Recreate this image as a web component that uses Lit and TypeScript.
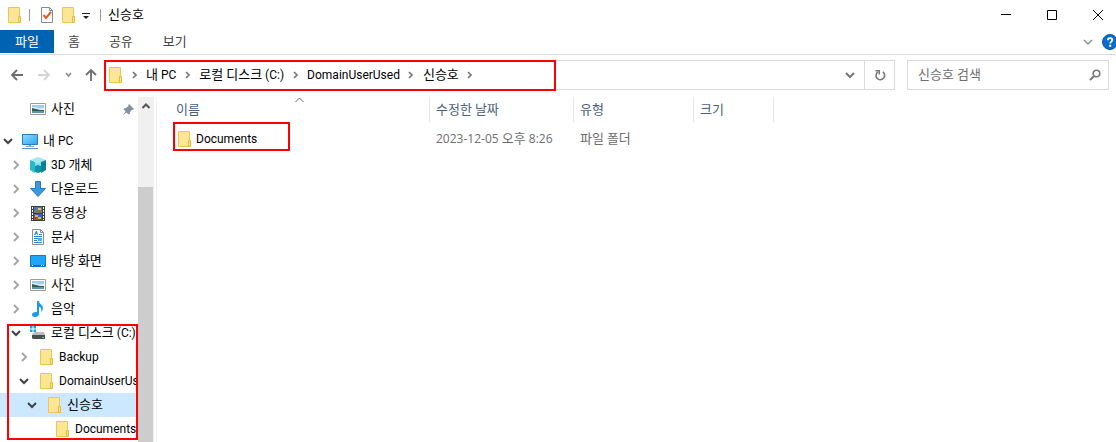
import { LitElement, html, css, svg, nothing, TemplateResult } from "lit";
import { customElement, property } from "lit/decorators.js";
import { classMap } from "lit/directives/class-map.js";
import { styleMap } from "lit/directives/style-map.js";

/** Hangul runs are set one size larger than the Latin text around them. */
const label = (text: string) =>
  html`<span>${text
    .split(/([\uac00-\ud7a3]+)/)
    .filter(Boolean)
    .map((run) => (/[\uac00-\ud7a3]/.test(run) ? html`<span class="ko">${run}</span>` : run))}</span>`;

const icon = (w: number, h: number, body: TemplateResult) =>
  html`<svg width=${w} height=${h} viewBox="0 0 ${w} ${h}" aria-hidden="true">${body}</svg>`;

const folder = () =>
  icon(16, 16, svg`
    <path d="M2.500.5h11v15h-11z" fill="#ffe694" stroke="#ecc655"/>
    <path d="M14 0h1v9h-1z" fill="#fff" fill-opacity="0"/>
    <path d="M12.500 9.500h2v6h-2z" fill="#ffe17f" stroke="#e6bb3c"/>`);

const picture = () =>
  icon(16, 16, svg`
    <path d="M.5 2.500h15v11H.5z" fill="#fff" stroke="#9c9c9c"/>
    <path d="M2 4h12v8H2z" fill="#9fcdf0"/>
    <path d="M2 6h3l3 1 6 0v2H2z" fill="#dcebf5"/>
    <path d="M2 7l4 1 4 1h4v1H2z" fill="#2f5e55"/>
    <path d="M2 10h12v2H2z" fill="#5e93b8"/>`);

const icons: Record<string, () => TemplateResult> = {
  folder,
  picture,
  pc: () =>
    icon(16, 16, svg`
      <defs><linearGradient id="g" x1="0" y1="0" x2="1" y2="1"><stop offset="0" stop-color="#8fdcff"/><stop offset="1" stop-color="#2da3ee"/></linearGradient></defs>
      <path d="M.5 1.500h15v10H.5z" fill="url(#g)" stroke="#1c7fbf"/>
      <path d="M7 12h2v1H7zM4 13h8v1H4z" fill="#8aa4b8"/>
      <path d="M0 15h16v1H0z" fill="#6d93b3"/>`),
  cube: () =>
    icon(16, 16, svg`
      <path d="M0 3l8-3 8 3-8 3z" fill="#9fe9f0"/>
      <path d="M0 3l5 2v11l-5-3z" fill="#27b9cc"/>
      <path d="M5 5l3 1 3-1v4l-3-1-3 2z" fill="#7be0ea"/>
      <path d="M5 9l3-1 3 1v6l-3 1-3-1z" fill="#0b94ab"/>
      <path d="M16 3l-5 2v11l5-3z" fill="#0e7f99"/>`),
  down: () => icon(16, 16, svg`<path d="M5.500.5h5v7h5L8 15.500.5 7.500h5z" fill="#3b97e3" stroke="#2179c7"/>`),
  film: () =>
    icon(16, 16, svg`
      <path d="M1 1h14v15H1z" fill="#3d3d3d"/>
      <path d="M4 2h8v6H4z" fill="#3f74d6"/><path d="M4 9h8v6H4z" fill="#3568c4"/>
      <path d="M4 5l3-2 2 2 3-1v4H4z" fill="#6d7f5d"/><path d="M8 3h3v2H8z" fill="#f2c24a"/>
      <path d="M5 10h3v2H5zM8 12h3v2H8z" fill="#e9b144"/><path d="M4 13h4v2H4z" fill="#a5503a"/>
      <path d="M2 2h1v2H2zM2 5h1v2H2zM2 8h1v2H2zM2 11h1v2H2zM2 14h1v1H2zM13 2h1v2h-1zM13 5h1v2h-1zM13 8h1v2h-1zM13 11h1v2h-1zM13 14h1v1h-1z" fill="#fff"/>`),
  doc: () =>
    icon(16, 16, svg`
      <path d="M2.500.5h8l3 3v12h-11z" fill="#fff" stroke="#8d8d8d"/>
      <path d="M10.500.5v3h3" fill="none" stroke="#8d8d8d"/>
      <path d="M4 6l2-4h1l1 4H7V5H6L5 6zM9 5h3v1H9zM4 7h8v1H4zM4 9h4v1H4zM4 11h3v1H4zM4 13h8v1H4z" fill="#2b87d1"/>
      <path d="M8 9h4v3H8z" fill="#58a9e4"/>`),
  desktop: () =>
    icon(16, 16, svg`
      <path d="M.5 2.500h15v11H.5z" fill="#1ea5fc" stroke="#1478c8"/>
      <path d="M1 12h14v1H1z" fill="#0b66b0"/>
      <path d="M2 12h1v1H2zM11 12h1v1h-1zM13 12h1v1h-1z" fill="#fff"/>`),
  music: () =>
    icon(16, 16, svg`
      <path d="M7 0h2c0 3 4 4 4 7 0 2-1 3-2 4 1-3 0-5-2-5v7c0 2-2 3-4 3-1.500 0-3-.8-3-2.300C2 12 4 11 5.500 11c.6 0 1 .1 1.500.3z" fill="#1c9bee"/>`),
  disk: () =>
    icon(16, 16, svg`
      <path d="M0 1h2.500v2.500H0zM3.500 1H6v2.500H3.500zM0 4.500h2.500V7H0zM3.500 4.500H6V7H3.500z" fill="#12a7f0"/>
      <path d="M3 8l2-1h9l1 3H2z" fill="#b9bcc0"/>
      <path d="M2 10h13v4H3l-1-1z" fill="#4a4e53"/>
      <path d="M12 12h2v1h-2z" fill="#44e05c"/>`),
};

const chevron = (open: boolean) =>
  open
    ? icon(10, 10, svg`<path d="M1 3l4 4 4-4" fill="none" stroke="#404040" stroke-width="2"/>`)
    : icon(10, 10, svg`<path d="M3 1l4 4-4 4" fill="none" stroke="#a6a6a6" stroke-width="2"/>`);

interface TreeItem {
  text: string;
  icon: string;
  level: number;
  open?: boolean;
  selected?: boolean;
}

const tree: TreeItem[] = [
  { text: "내 PC", icon: "pc", level: 0, open: true },
  { text: "3D 개체", icon: "cube", level: 1, open: false },
  { text: "다운로드", icon: "down", level: 1, open: false },
  { text: "동영상", icon: "film", level: 1, open: false },
  { text: "문서", icon: "doc", level: 1, open: false },
  { text: "바탕 화면", icon: "desktop", level: 1, open: false },
  { text: "사진", icon: "picture", level: 1, open: false },
  { text: "음악", icon: "music", level: 1, open: false },
  { text: "로컬 디스크 (C:)", icon: "disk", level: 1, open: true },
  { text: "Backup", icon: "folder", level: 2, open: false },
  { text: "DomainUserUsed", icon: "folder", level: 2, open: true },
  { text: "신승호", icon: "folder", level: 3, open: true, selected: true },
  { text: "Documents", icon: "folder", level: 4 },
];

const shared = css`
  :host,
  * {
    box-sizing: border-box;
  }
  button,
  input {
    font: inherit;
    color: inherit;
    background: none;
    border: 0;
    padding: 0;
    margin: 0;
  }
  button {
    display: flex;
    align-items: center;
    justify-content: center;
    white-space: nowrap;
  }
  .ko {
    font-size: 13px;
  }
  svg {
    display: block;
    flex: none;
  }
`;

@customElement("explorer-titlebar")
export class ExplorerTitlebar extends LitElement {
  static styles = [
    shared,
    css`
      :host {
        display: block;
        overflow: hidden;
      }
      .title {
        display: flex;
        align-items: center;
        height: 29px;
        padding-left: 6px;
      }
      .rule {
        width: 1px;
        height: 12px;
        background: #999;
        margin: 0 7px;
      }
      .quick {
        margin: 0 3px;
      }
      .name {
        flex: 1;
        font-weight: normal;
        font-size: 12px;
        margin: 0;
      }
      .window {
        display: flex;
        margin-right: -5px;
      }
      .window button {
        width: 46px;
        height: 28px;
      }
      .tabs {
        display: flex;
        height: 26px;
        border-bottom: 1px solid #dadbdc;
        color: #444;
      }
      .tabs button {
        height: 23px;
        margin-top: 1px;
        padding: 0 15px;
      }
      .tabs .file {
        background: #0063b1;
        color: #fff;
      }
      .tabs .file + button {
        padding: 0 14px;
      }
      .right {
        display: flex;
        gap: 9px;
        margin: 0 -2px 0 auto;
      }
      .tabs .right button {
        padding: 0;
      }
    `,
  ];

  render() {
    return html`
      <div class="title">
        ${folder()}
        <span class="rule"></span>
        <button class="quick" aria-label="속성">
          ${icon(14, 16, svg`
            <path d="M1.500.5h8l3 3v12h-11z" fill="#fafafa" stroke="#8a8a8a"/>
            <path d="M9.500.5v3h3" fill="none" stroke="#8a8a8a"/>
            <path d="M3.500 8l2.500 3 5-6" fill="none" stroke="#e2592a" stroke-width="2"/>`)}
        </button>
        <button class="quick" aria-label="새 폴더">${folder()}</button>
        <button class="quick" aria-label="빠른 실행 도구 모음 사용자 지정">
          ${icon(8, 12, svg`<path d="M0 4h8v1H0zM1 7h6L4 10z" fill="#222"/>`)}
        </button>
        <span class="rule"></span>
        <h1 class="name">${label("신승호")}</h1>
        <div class="window">
          <button aria-label="최소화">${icon(10, 10, svg`<path d="M0 4h10v1H0z"/>`)}</button>
          <button aria-label="최대화">${icon(10, 10, svg`<path d="M.5.500h9v9h-9z" fill="none" stroke="#000"/>`)}</button>
          <button aria-label="닫기">${icon(10, 10, svg`<path d="M0 0l10 10M10 0L0 10" stroke="#000"/>`)}</button>
        </div>
      </div>
      <nav class="tabs">
        <button class="file">${label("파일")}</button>
        <button>${label("홈")}</button>
        <button>${label("공유")}</button>
        <button>${label("보기")}</button>
        <div class="right">
          <button aria-label="리본 확장">
            ${icon(10, 8, svg`<path d="M1 2l4 4 4-4" fill="none" stroke="#8a8a8a" stroke-width="1.300"/>`)}
          </button>
          <button aria-label="도움말">
            ${icon(16, 16, svg`
              <circle cx="8" cy="8" r="7.500" fill="#0a6cce" stroke="#0a56a8"/>
              <path d="M5.800 6.200C5.800 3.300 10.300 3.500 10.300 6c0 1.600-2.100 1.700-2.100 3.600" fill="none" stroke="#fff" stroke-width="1.800"/>
              <path d="M7.200 10.800h2v2h-2z" fill="#fff"/>`)}
          </button>
        </div>
      </nav>
    `;
  }
}

@customElement("explorer-address")
export class ExplorerAddress extends LitElement {
  @property({ attribute: false }) path = ["내 PC", "로컬 디스크 (C:)", "DomainUserUsed", "신승호"];

  static styles = [
    shared,
    css`
      :host {
        display: flex;
        height: 42px;
        padding: 5px 7px 7px 10px;
      }
      .nav {
        display: flex;
        width: 95px;
        align-items: center;
        justify-content: space-between;
        padding-right: 8px;
        flex: none;
      }
      .bar {
        position: relative;
        display: flex;
        align-items: center;
        flex: 1;
        border: 1px solid #d9d9d9;
        padding-left: 1px;
      }
      .crumb {
        display: flex;
        align-items: center;
      }
      .crumb button {
        padding-bottom: 1px;
      }
      .sep {
        display: flex;
        width: 23px;
        justify-content: center;
      }
      .drop {
        margin-left: auto;
        width: 29px;
        height: 28px;
      }
      .refresh {
        width: 30px;
        height: 28px;
        border-left: 1px solid #d9d9d9;
      }
      .search {
        display: flex;
        align-items: center;
        width: 202px;
        margin-left: 12px;
        border: 1px solid #d9d9d9;
        padding: 0 7px 0 10px;
      }
      .search input {
        flex: 1;
        min-width: 0;
        font-size: 13px;
        outline: 0;
        padding-bottom: 1px;
      }
      .search input::placeholder {
        color: #6d6d6d;
        opacity: 1;
      }
      .mark {
        position: absolute;
        left: -2px;
        top: -1px;
        width: 452px;
        height: 31px;
        border: 2px solid #f00;
        pointer-events: none;
      }
    `,
  ];

  private sep() {
    return html`<span class="sep">${icon(6, 8, svg`<path d="M1 1l3 3-3 3" fill="none" stroke="#777" stroke-width="1.700"/>`)}</span>`;
  }

  render() {
    return html`
      <div class="nav">
        <button aria-label="뒤로">${icon(14, 12, svg`<path d="M13 6H2M7 1L2 6l5 5" fill="none" stroke="#6e6e6e" stroke-width="1.800"/>`)}</button>
        <button aria-label="앞으로">${icon(14, 12, svg`<path d="M1 6h11M7 1l5 5-5 5" fill="none" stroke="#d4d4d4" stroke-width="1.800"/>`)}</button>
        <button aria-label="최근 위치">${icon(7, 6, svg`<path d="M1 1l2.500 3L6 1" fill="none" stroke="#888" stroke-width="1.500"/>`)}</button>
        <button aria-label="위로">${icon(12, 14, svg`<path d="M6 13V2M1 7l5-5 5 5" fill="none" stroke="#6e6e6e" stroke-width="1.800"/>`)}</button>
      </div>
      <div class="bar">
        ${folder()} ${this.sep()}
        ${this.path.map((part) => html`<span class="crumb"><button>${label(part)}</button>${this.sep()}</span>`)}
        <button class="drop" aria-label="이전 위치">
          ${icon(10, 8, svg`<path d="M1 2l4 4 4-4" fill="none" stroke="#777" stroke-width="2"/>`)}
        </button>
        <button class="refresh" aria-label="새로 고침">
          ${icon(12, 12, svg`<path d="M8.800 2.900A4.300 4.300 0 1 1 4 2.800" fill="none" stroke="#777" stroke-width="1.600"/><path d="M1.500 1h4.500v4.500H4.500V2.500h-3z" fill="#777"/>`)}
        </button>
        <span class="mark"></span>
      </div>
      <label class="search">
        <input type="search" aria-label="신승호 검색" placeholder="신승호 검색" />
        ${icon(12, 12, svg`<circle cx="7.500" cy="4.500" r="3.300" fill="none" stroke="#777" stroke-width="1.600"/><path d="M5 7l-4 4" stroke="#777" stroke-width="2"/>`)}
      </label>
    `;
  }
}

@customElement("explorer-tree")
export class ExplorerTree extends LitElement {
  static styles = [
    shared,
    css`
      :host {
        display: flex;
        min-height: 0;
        border-right: 1px solid #f0f0f0;
        padding-right: 2px;
      }
      .items {
        position: relative;
        flex: 1;
        min-width: 0;
        overflow: hidden;
      }
      ul {
        list-style: none;
        margin: 0;
        padding: 0;
      }
      .quick {
        margin-bottom: 8px;
      }
      .row {
        display: flex;
        align-items: center;
        height: 24px;
        white-space: nowrap;
      }
      .selected {
        background: #cce8ff;
      }
      .toggle {
        width: 16px;
        height: 24px;
        flex: none;
        margin-right: 6px;
      }
      .text {
        padding-left: 5px;
      }
      .pin {
        margin: 0 4px 0 auto;
      }
      .scroll {
        width: 16px;
        background: #f0f0f0;
        display: flex;
        flex-direction: column;
      }
      .scroll button {
        height: 17px;
      }
      .thumb {
        flex: 1;
        margin: 73px 1px 0 0;
        background: #cdcdcd;
      }
      .mark {
        position: absolute;
        left: 7px;
        right: 0;
        top: 227px;
        height: 116px;
        border: 2px solid #f00;
        pointer-events: none;
      }
    `,
  ];

  private row(item: TreeItem, pinned = false) {
    return html`<li
      class=${classMap({ row: true, selected: !!item.selected })}
      style=${styleMap({ paddingLeft: `${item.level * 8}px` })}
    >
      ${item.open === undefined
        ? html`<span class="toggle"></span>`
        : html`<button class="toggle" aria-label="${item.text} ${item.open ? "접기" : "펼치기"}">${chevron(item.open)}</button>`}
      ${icons[item.icon]()}
      <span class="text">${label(item.text)}</span>
      ${pinned
        ? html`<span class="pin">${icon(11, 11, svg`<path d="M6 0l5 5-1 1-1-.3L7 8l-.3 2-1 .6-2.200-2.200L0 11l2.600-3.500L.5 5.300 1 4.400 3 4l2.500-2L5.200 1z" fill="#8291a0"/>`)}</span>`
        : nothing}
    </li>`;
  }

  render() {
    return html`
      <nav class="items">
        <ul class="quick">${this.row({ text: "사진", icon: "picture", level: 1 }, true)}</ul>
        <ul>${tree.map((item) => this.row(item))}</ul>
        <span class="mark"></span>
      </nav>
      <div class="scroll">
        <button aria-label="위로 스크롤">
          ${icon(10, 8, svg`<path d="M1.500 6L5 2.500 8.500 6" fill="none" stroke="#555" stroke-width="2"/>`)}
        </button>
        <span class="thumb"></span>
      </div>
    `;
  }
}

@customElement("explorer-list")
export class ExplorerList extends LitElement {
  static styles = [
    shared,
    css`
      :host {
        display: block;
      }
      table {
        width: 100%;
        table-layout: fixed;
        border-collapse: separate;
        border-spacing: 0;
      }
      .c-name {
        width: 273px;
      }
      .c-date {
        width: 144px;
      }
      .c-type {
        width: 120px;
      }
      .c-size {
        width: 80px;
      }
      th,
      td {
        position: relative;
        height: 25px;
        padding: 0 0 0 6px;
        text-align: left;
        font-weight: normal;
        white-space: nowrap;
        color: #6d6d6d;
      }
      th {
        border-right: 1px solid #e5e5e5;
        color: #4c607a;
      }
      th:last-child {
        border: 0;
      }
      th:first-child {
        padding-left: 19px;
      }
      td {
        height: 33px;
      }
      td:first-child {
        padding-left: 19px;
        color: #000;
      }
      .date {
        font-family: "Open Sans", "Noto Sans CJK KR", sans-serif;
      }
      .sort {
        position: absolute;
        left: 138px;
        top: 0;
      }
      .file {
        display: flex;
        align-items: center;
        gap: 4px;
      }
      .mark {
        position: absolute;
        left: 16px;
        top: 0;
        width: 117px;
        height: 29px;
        border: 2px solid #f00;
        pointer-events: none;
      }
    `,
  ];

  render() {
    return html`
      <table>
        <colgroup>
          <col class="c-name" /><col class="c-date" /><col class="c-type" /><col class="c-size" /><col />
        </colgroup>
        <thead>
          <tr>
            <th>
              ${label("이름")}
              <span class="sort">${icon(9, 6, svg`<path d="M.5 5l4-4 4 4" fill="none" stroke="#666"/>`)}</span>
            </th>
            <th>${label("수정한 날짜")}</th>
            <th>${label("유형")}</th>
            <th>${label("크기")}</th>
            <th></th>
          </tr>
        </thead>
        <tbody>
          <tr>
            <td>
              <span class="file">${folder()}<span>Documents</span></span>
              <span class="mark"></span>
            </td>
            <td class="date">${label("2023-12-05 오후 8:26")}</td>
            <td>${label("파일 폴더")}</td>
            <td></td>
            <td></td>
          </tr>
        </tbody>
      </table>
    `;
  }
}

@customElement("app-root")
export class AppRoot extends LitElement {
  static styles = css`
    :host {
      display: flex;
      flex-direction: column;
      height: 100vh;
      overflow: hidden;
      background: #fff;
      color: #000;
      font: 12px/18px Roboto, "Noto Sans CJK KR", sans-serif;
    }
    .main {
      flex: 1;
      min-height: 0;
      display: grid;
      grid-template-columns: 157px 1fr;
      grid-template-rows: minmax(0, 1fr);
    }
  `;

  render() {
    return html`
      <explorer-titlebar></explorer-titlebar>
      <explorer-address></explorer-address>
      <div class="main">
        <explorer-tree></explorer-tree>
        <explorer-list></explorer-list>
      </div>
    `;
  }
}
